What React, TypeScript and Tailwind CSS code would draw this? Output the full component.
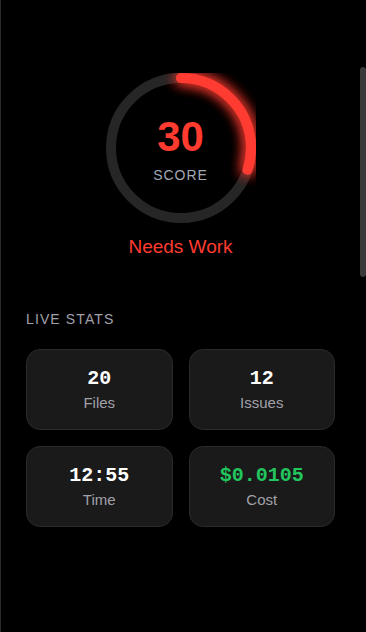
import React from 'react';

type Stat = { label: string; value: string; accent?: boolean };

const stats: Stat[] = [
  { label: 'Files', value: '20' },
  { label: 'Issues', value: '12' },
  { label: 'Time', value: '12:55' },
  { label: 'Cost', value: '$0.0105', accent: true },
];

function ScoreRing({ score }: { score: number }) {
  const r = 70;
  const c = 2 * Math.PI * r;
  const len = (score / 100) * c;
  return (
    <div className="relative w-[150px] h-[150px]">
      <svg width={150} height={150} viewBox="0 0 150 150" className="block">
        <defs>
          <filter id="glow" x="-50%" y="-50%" width="200%" height="200%">
            <feGaussianBlur stdDeviation="7" result="b" />
            <feMerge>
              <feMergeNode in="b" />
              <feMergeNode in="b" />
              <feMergeNode in="SourceGraphic" />
            </feMerge>
          </filter>
        </defs>
        <circle cx={75} cy={75} r={r} fill="none" stroke="#262626" strokeWidth={10} />
        <circle
          cx={75}
          cy={75}
          r={r}
          fill="none"
          stroke="#ff3b30"
          strokeWidth={10}
          strokeLinecap="round"
          strokeDasharray={`${len} ${c}`}
          transform="rotate(-90 75 75)"
          filter="url(#glow)"
        />
      </svg>
      <div className="absolute inset-0 flex flex-col items-center justify-center">
        <span className="text-[42px] leading-none font-bold text-[#ff3b30] mt-[2px]">{score}</span>
        <span className="mt-[10px] text-[14px] leading-none tracking-[0.07em] text-[#a3a9b5]">SCORE</span>
      </div>
    </div>
  );
}

export default function App() {
  return (
    <div className="flex h-[632px] w-[366px] bg-black border-l border-[#2a2a2a] overflow-hidden font-['Liberation_Sans',Arial,sans-serif]">
      <main className="flex-1 px-[25px] pt-[73px]">
        <div className="flex flex-col items-center">
          <ScoreRing score={30} />
          <p className="mt-[12px] text-[19px] leading-[24px] text-[#ff3b30]">Needs Work</p>
        </div>

        <h2 className="mt-[52px] text-[14px] leading-[16px] tracking-[0.08em] text-[#a1a1aa]">LIVE STATS</h2>

        <ul className="mt-[22px] grid grid-cols-2 gap-4">
          {stats.map((s) => (
            <li
              key={s.label}
              className="h-[81px] rounded-[14px] bg-[#1a1a1a] border border-[#2a2a2a] flex flex-col items-center justify-center"
            >
              <span
                className={`font-['Liberation_Mono',monospace] text-[20px] leading-[24px] font-bold ${s.accent ? 'text-[#22c55e]' : 'text-white'}`}
              >
                {s.value}
              </span>
              <span className="mt-[2px] text-[15px] leading-[20px] text-[#a1a1aa]">{s.label}</span>
            </li>
          ))}
        </ul>
      </main>
      <div className="w-[6px] pt-[67px]">
        <div className="h-[210px] rounded-full bg-[#3a3a3a]" />
      </div>
    </div>
  );
}
